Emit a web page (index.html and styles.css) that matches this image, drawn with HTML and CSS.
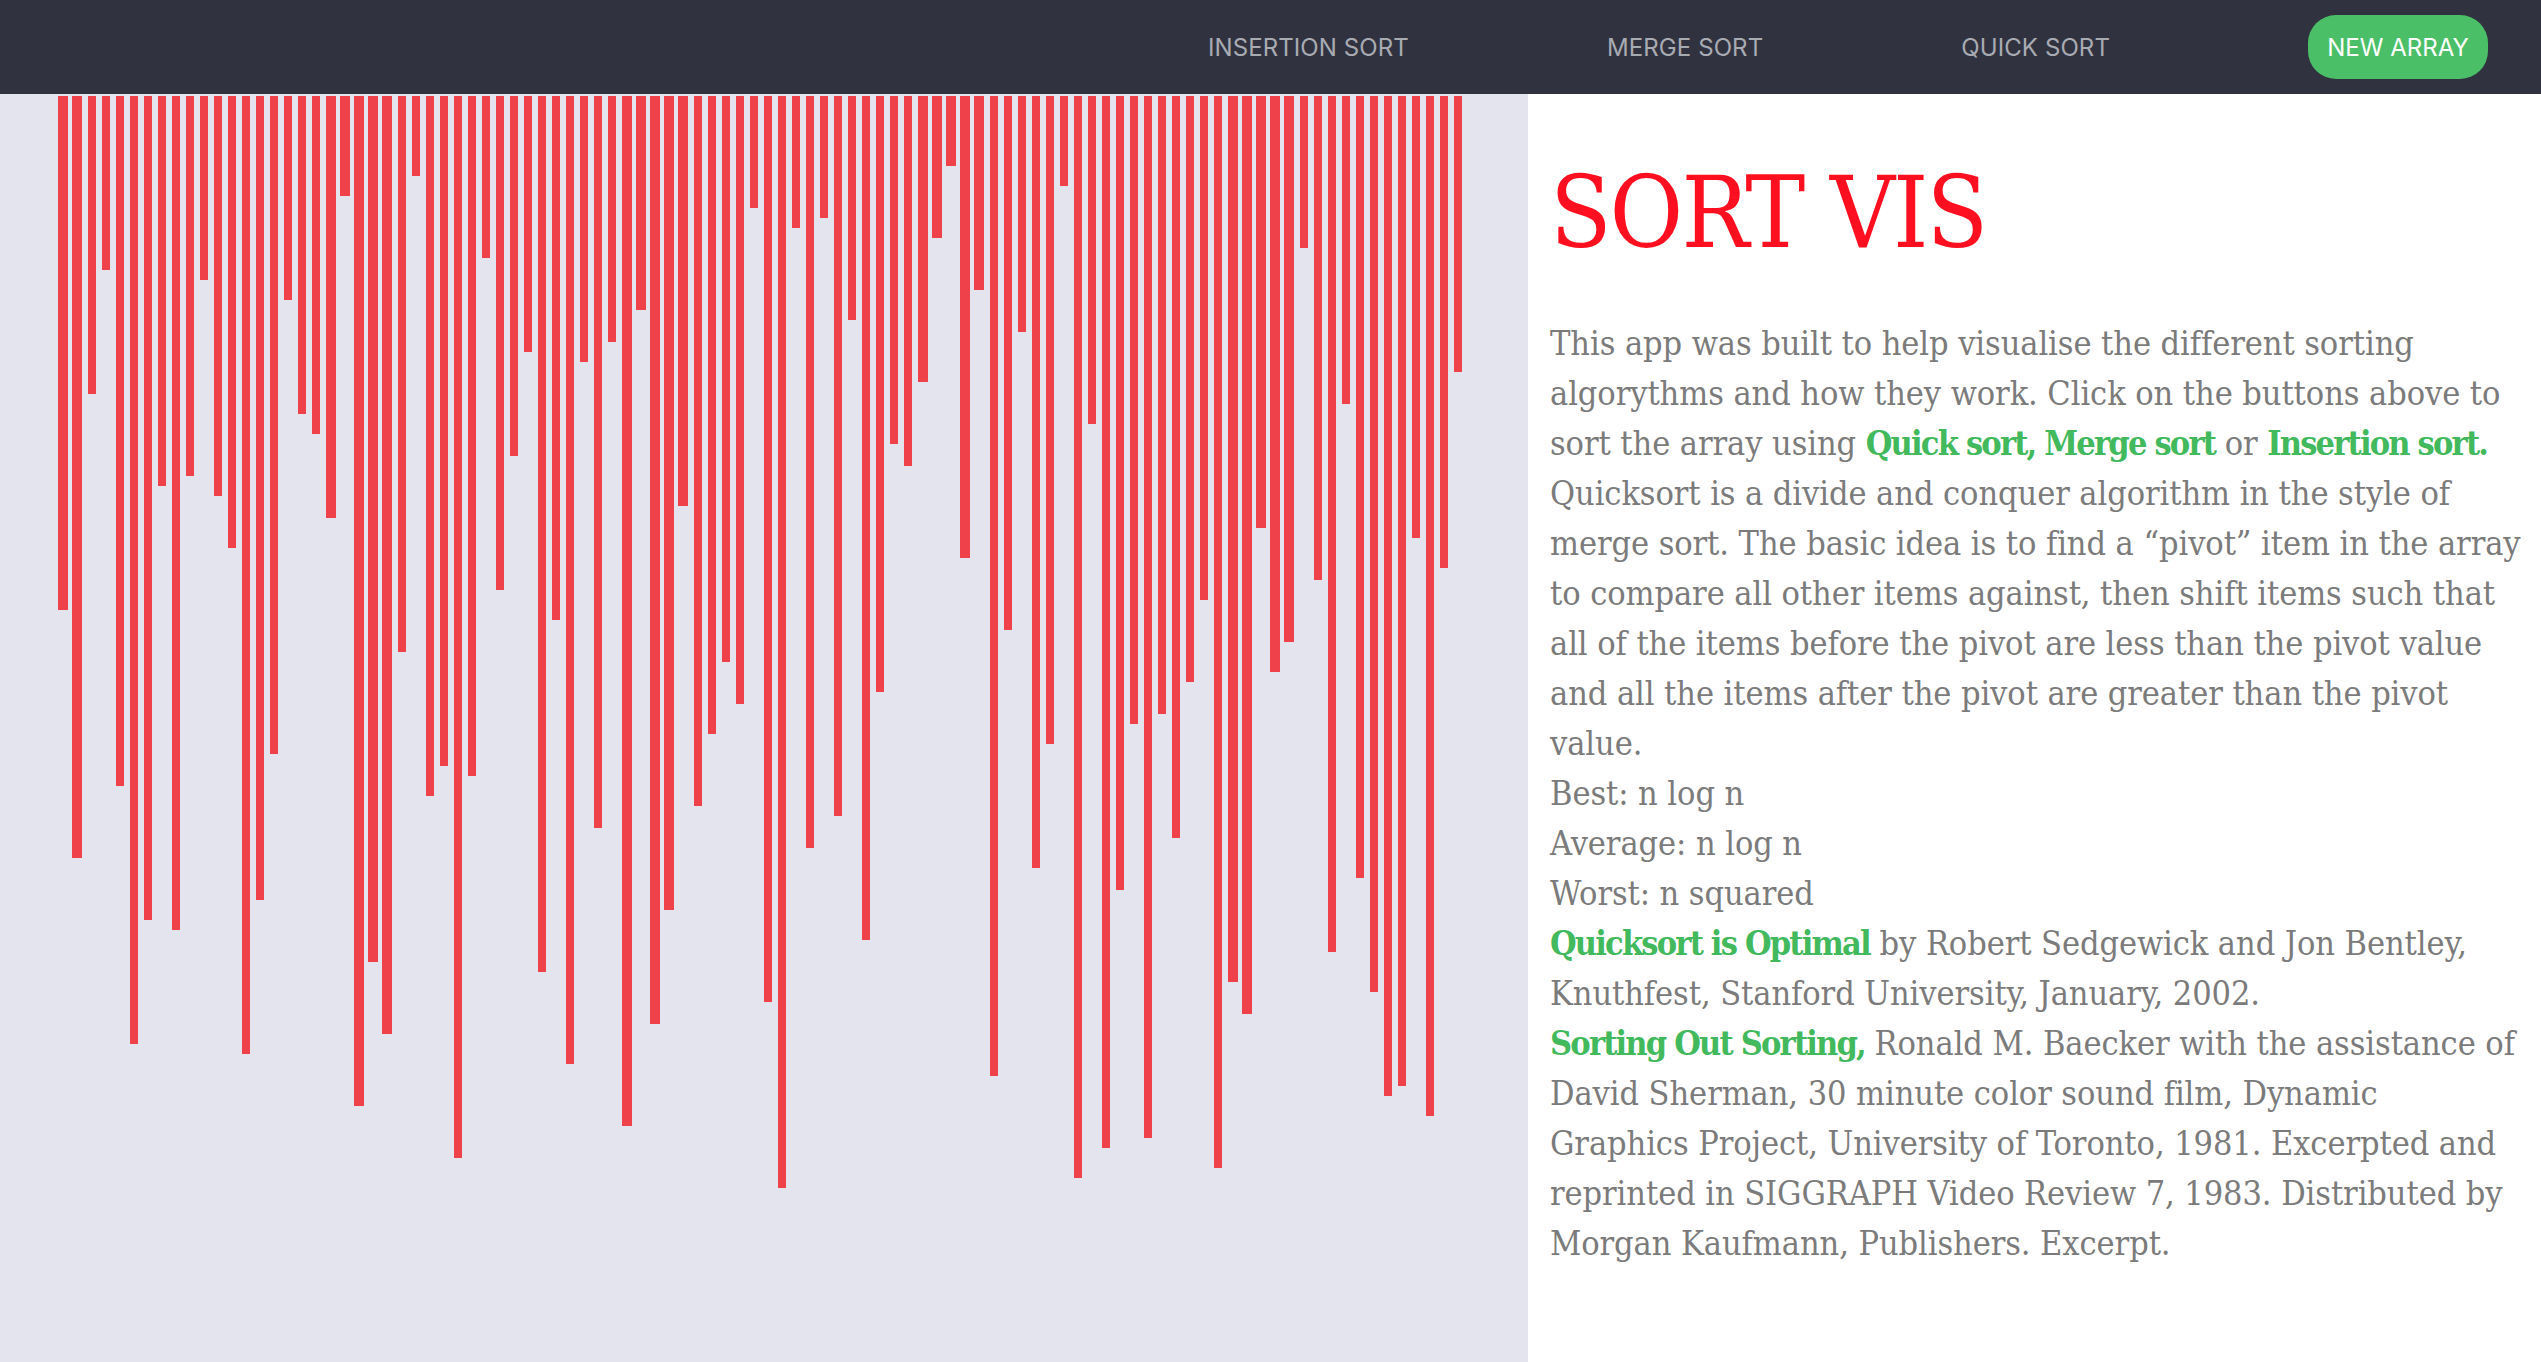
FILE: index.html
```html
<!DOCTYPE html>
<html lang="en">
<head>
  <meta charset="UTF-8">
  <title>Sort Vis</title>
  <link rel="stylesheet" href="styles.css">
</head>
<body>

<nav class="navbar">
  <a href="#" class="nav-link">INSERTION SORT</a>
  <a href="#" class="nav-link">MERGE SORT</a>
  <a href="#" class="nav-link">QUICK SORT</a>
  <button class="new-array">NEW ARRAY</button>
</nav>

<div class="main">
  <div class="chart">
    <div class="bar wide" style="height:514px"></div><div class="bar wide" style="height:762px"></div><div class="bar" style="height:298px"></div><div class="bar" style="height:174px"></div><div class="bar" style="height:690px"></div>
    <div class="bar" style="height:948px"></div><div class="bar" style="height:824px"></div><div class="bar" style="height:390px"></div><div class="bar" style="height:834px"></div><div class="bar" style="height:380px"></div>
    <div class="bar" style="height:184px"></div><div class="bar" style="height:400px"></div><div class="bar" style="height:452px"></div><div class="bar" style="height:958px"></div><div class="bar" style="height:804px"></div>
    <div class="bar" style="height:658px"></div><div class="bar" style="height:204px"></div><div class="bar" style="height:318px"></div><div class="bar" style="height:338px"></div><div class="bar wide" style="height:422px"></div>
    <div class="bar wide" style="height:100px"></div><div class="bar wide" style="height:1010px"></div><div class="bar wide" style="height:866px"></div><div class="bar wide" style="height:938px"></div><div class="bar" style="height:556px"></div>
    <div class="bar" style="height:80px"></div><div class="bar" style="height:700px"></div><div class="bar" style="height:670px"></div><div class="bar" style="height:1062px"></div><div class="bar" style="height:680px"></div>
    <div class="bar" style="height:162px"></div><div class="bar" style="height:494px"></div><div class="bar" style="height:360px"></div><div class="bar" style="height:256px"></div><div class="bar" style="height:876px"></div>
    <div class="bar" style="height:524px"></div><div class="bar" style="height:968px"></div><div class="bar" style="height:266px"></div><div class="bar" style="height:732px"></div><div class="bar" style="height:246px"></div>
    <div class="bar wide" style="height:1030px"></div><div class="bar wide" style="height:214px"></div><div class="bar wide" style="height:928px"></div><div class="bar wide" style="height:814px"></div><div class="bar wide" style="height:410px"></div>
    <div class="bar" style="height:710px"></div><div class="bar" style="height:638px"></div><div class="bar" style="height:566px"></div><div class="bar" style="height:608px"></div><div class="bar" style="height:112px"></div>
    <div class="bar" style="height:906px"></div><div class="bar" style="height:1092px"></div><div class="bar" style="height:132px"></div><div class="bar" style="height:752px"></div><div class="bar" style="height:122px"></div>
    <div class="bar" style="height:720px"></div><div class="bar" style="height:224px"></div><div class="bar" style="height:844px"></div><div class="bar" style="height:596px"></div><div class="bar" style="height:348px"></div>
    <div class="bar" style="height:370px"></div><div class="bar wide" style="height:286px"></div><div class="bar wide" style="height:142px"></div><div class="bar wide" style="height:70px"></div><div class="bar wide" style="height:462px"></div>
    <div class="bar wide" style="height:194px"></div><div class="bar" style="height:980px"></div><div class="bar" style="height:534px"></div><div class="bar" style="height:236px"></div><div class="bar" style="height:772px"></div>
    <div class="bar" style="height:648px"></div><div class="bar" style="height:90px"></div><div class="bar" style="height:1082px"></div><div class="bar" style="height:328px"></div><div class="bar" style="height:1052px"></div>
    <div class="bar" style="height:794px"></div><div class="bar" style="height:628px"></div><div class="bar" style="height:1042px"></div><div class="bar" style="height:618px"></div><div class="bar" style="height:742px"></div>
    <div class="bar" style="height:586px"></div><div class="bar" style="height:504px"></div><div class="bar" style="height:1072px"></div><div class="bar wide" style="height:886px"></div><div class="bar wide" style="height:918px"></div>
    <div class="bar wide" style="height:432px"></div><div class="bar wide" style="height:576px"></div><div class="bar wide" style="height:546px"></div><div class="bar" style="height:152px"></div><div class="bar" style="height:484px"></div>
    <div class="bar" style="height:856px"></div><div class="bar" style="height:308px"></div><div class="bar" style="height:782px"></div><div class="bar" style="height:896px"></div><div class="bar" style="height:1000px"></div>
    <div class="bar" style="height:990px"></div><div class="bar" style="height:442px"></div><div class="bar" style="height:1020px"></div><div class="bar" style="height:472px"></div><div class="bar" style="height:276px"></div>
  </div>

  <div class="info">
    <h1>SORT VIS</h1>
    <p>
      This app was built to help visualise the different sorting algorythms and how they work. Click on the buttons above to sort the array using <a href="#">Quick sort, Merge sort</a> or <a href="#">Insertion sort.</a><br>
      Quicksort is a divide and conquer algorithm in the style of merge sort. The basic idea is to find a “pivot” item in the array to compare all other items against, then shift items such that all of the items before the pivot are less than the pivot value and all the items after the pivot are greater than the pivot value.<br>
      Best: n log n<br>
      Average: n log n<br>
      Worst: n squared<br>
      <a href="#">Quicksort is Optimal</a> by Robert Sedgewick and Jon Bentley, Knuthfest, Stanford University, January, 2002.<br>
      <a href="#">Sorting Out Sorting,</a> Ronald M. Baecker with the assistance of David Sherman, 30 minute color sound film, Dynamic Graphics Project, University of Toronto, 1981. Excerpted and reprinted in SIGGRAPH Video Review 7, 1983. Distributed by Morgan Kaufmann, Publishers. Excerpt.
    </p>
  </div>
</div>

</body>
</html>
```

FILE: styles.css
```css
html, body {
  margin: 0;
  height: 100%;
}
body {
  display: flex;
  flex-direction: column;
  font-family: "DejaVu Serif Condensed", "DejaVu Serif", serif;
  background: white;
  overflow: hidden;
}
.navbar {
  display: flex;
  flex: none;
  justify-content: flex-end;
  align-items: center;
  gap: 198px;
  height: 94px;
  background: #30333f;
  padding-right: 53px;
}
.nav-link {
  font-family: Inter, sans-serif;
  font-size: 24px;
  letter-spacing: 0.1px;
  color: #a9abb3;
  text-decoration: none;
}
.new-array {
  font-family: Inter, sans-serif;
  font-size: 24px;
  color: white;
  background: #4bbf67;
  border: none;
  border-radius: 28px;
  height: 64px;
  width: 180px;
  padding: 0;
}
.main {
  display: flex;
  flex: 1;
  min-height: 0;
}
.chart {
  display: flex;
  align-items: flex-start;
  flex: none;
  width: 1528px;
  box-sizing: border-box;
  background: #e3e4ee;
  padding: 2px 0 0 58px;
}
.bar {
  flex: none;
  width: 8px;
  background: #ef4149;
}
.bar + .bar {
  margin-left: 6px;
}
.wide {
  width: 10px;
}
.wide + .wide {
  margin-left: 4px;
}
.info {
  flex: 1;
  padding: 0 19px 0 22px;
  min-width: 0;
}
h1 {
  font-size: 100px;
  font-weight: normal;
  letter-spacing: -2px;
  color: #ff0f1f;
  margin: 59px 0 45px;
  line-height: 120px;
}
p {
  font-size: 34px;
  line-height: 50px;
  letter-spacing: -0.08px;
  color: #7b7b7b;
  margin: 0;
}
p a {
  color: #41b95c;
  font-weight: bold;
  letter-spacing: -1.8px;
  text-decoration: none;
}
```
